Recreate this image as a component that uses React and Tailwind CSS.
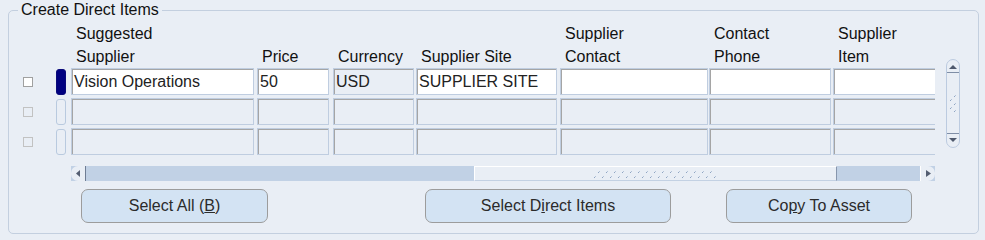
import React from "react";

const columns = [
  { cls: "w-[183px]", label: ["Suggested", "Supplier"], value: "Vision Operations" },
  { cls: "ml-[3px] w-[72px]", label: ["Price"], value: "50" },
  { cls: "ml-[4px] w-[81px]", label: ["Currency"], value: "USD", readOnly: true },
  { cls: "ml-[2px] w-[141px]", label: ["Supplier Site"], value: "SUPPLIER SITE" },
  { cls: "ml-[3px] w-[148px]", label: ["Supplier", "Contact"], value: "" },
  { cls: "ml-[1px] w-[122px]", label: ["Contact", "Phone"], value: "" },
  { cls: "ml-[2px] w-[120px]", label: ["Supplier", "Item"], value: "" },
];

const rows = [0, 1, 2];

function Field({ col, active }) {
  const bg = active && !col.readOnly ? "bg-white" : "bg-[#e9eef5]";
  return (
    <div
      className={`${col.cls} ${bg} h-[27px] shrink-0 overflow-hidden whitespace-nowrap border border-[#bfcde0] px-[2px] text-[16px] leading-[25px] text-[#222] shadow-[inset_1px_1px_0_#a5a5a5]`}
    >
      {active ? col.value : ""}
    </div>
  );
}

function GripDots() {
  const top = Array.from({ length: 15 }, (_, i) => 5 + i * 8);
  const bottom = Array.from({ length: 16 }, (_, i) => 1 + i * 8);
  return (
    <svg width="126" height="10" viewBox="0 0 126 10">
      {top.map((x) => (
        <g key={"t" + x}>
          <rect x={x} y={3} width="1" height="1" fill="#8ea4c2" />
          <rect x={x + 1} y={2} width="1" height="1" fill="#b3c3d8" />
        </g>
      ))}
      {bottom.map((x) => (
        <g key={"b" + x}>
          <rect x={x} y={8} width="1" height="1" fill="#8ea4c2" />
          <rect x={x + 1} y={7} width="1" height="1" fill="#b3c3d8" />
        </g>
      ))}
    </svg>
  );
}

function HScroll() {
  return (
    <div className="mt-[11px] ml-[62px] flex h-[15px] w-[864px] bg-[#c1d1e5]">
      <div className="flex h-[15px] w-[15px] items-center justify-center rounded-l-[7px] border-r border-[#6f7d94] bg-[#e9eef5]">
        <svg width="5" height="7" viewBox="0 0 5 7">
          <polygon points="4,0 4,7 0,3.5" fill="#545e72" />
        </svg>
      </div>
      <div className="w-[388px]" />
      <div className="flex h-[15px] w-[363px] items-center justify-center border-t border-l border-b border-r border-t-white border-l-white border-b-[#c3d1e3] border-r-[#8796ad] bg-[#e9eef5]">
        <GripDots />
      </div>
      <div className="w-[83px]" />
      <div className="flex h-[15px] w-[15px] items-center justify-center rounded-r-[7px] border-l border-white bg-[#e9eef5]">
        <svg width="5" height="7" viewBox="0 0 5 7">
          <polygon points="0,0 0,7 5,3.5" fill="#545e72" />
        </svg>
      </div>
    </div>
  );
}

function VScroll() {
  return (
    <div className="mt-[37px] ml-[11px] flex h-[89px] w-[14px] flex-col rounded-full border border-[#bccbe0] bg-[#e9eef5]">
      <div className="flex h-[13px] items-center justify-center border-b border-[#7f8ea6] pt-[1px]">
        <svg width="8" height="4" viewBox="0 0 8 4">
          <polygon points="0,4 8,4 4,0" fill="#4f596d" />
        </svg>
      </div>
      <div className="flex flex-1 items-center justify-center">
        <svg width="8" height="18" viewBox="0 0 8 18">
          {[
            [5, 1],
            [1, 5],
            [5, 9],
            [1, 13],
            [5, 16],
          ].map(([x, y]) => (
            <g key={x + "-" + y}>
              <rect x={x} y={y + 1} width="1" height="1" fill="#8ea4c2" />
              <rect x={x + 1} y={y} width="1" height="1" fill="#b3c3d8" />
            </g>
          ))}
        </svg>
      </div>
      <div className="flex h-[14px] items-center justify-center border-t border-[#7f8ea6] pb-[2px]">
        <svg width="8" height="4" viewBox="0 0 8 4">
          <polygon points="0,0 8,0 4,4" fill="#4f596d" />
        </svg>
      </div>
    </div>
  );
}

function Button({ className, children }) {
  return (
    <button
      className={`${className} flex h-[34px] shrink-0 items-center justify-center rounded-[7px] border border-[#9c9c9c] bg-[#d3e3f3] text-[16px] text-[#2b2b2b]`}
    >
      {children}
    </button>
  );
}

export default function App() {
  return (
    <div className="h-[240px] w-[985px] overflow-hidden bg-[#e9eef5] pt-[10px] pl-[8px] font-[Liberation_Sans,Arial,sans-serif]">
      <div className="relative h-[224px] w-[971px] rounded-[5px] border border-[#c3cfdf] pt-[11px]">
        <span className="absolute top-[-10px] left-[9px] bg-[#e9eef5] px-[3px] text-[16px] leading-[18px] text-[#111]">
          Create Direct Items
        </span>

        <div className="flex">
          <div className="w-[926px] shrink-0">
            <div className="ml-[62px] flex h-[46px] w-[864px] overflow-hidden">
              {columns.map((col) => (
                <div
                  key={col.label.join(" ")}
                  className={`${col.cls} flex shrink-0 flex-col justify-end pl-[5px] text-[16px] leading-[23px] whitespace-nowrap text-[#111]`}
                >
                  {col.label.map((l) => (
                    <span key={l}>{l}</span>
                  ))}
                </div>
              ))}
            </div>

            <div className="flex flex-col gap-[3px]">
              {rows.map((r) => {
                const active = r === 0;
                return (
                  <div key={r} className="flex h-[27px] items-center">
                    <div className="w-[47px] shrink-0">
                      <div
                        className={`ml-[14px] h-[10px] w-[10px] border ${
                          active ? "border-[#a0a0a0] bg-white" : "border-[#c2c2c2] bg-[#e9eef5]"
                        }`}
                      />
                    </div>
                    <div
                      className={`h-[26px] w-[10px] shrink-0 rounded-[3px] border ${
                        active ? "border-[#0a0a7a] bg-[#000080]" : "border-[#b9cadf] bg-[#e9eef5]"
                      }`}
                    />
                    <div className="ml-[5px] flex w-[864px] overflow-hidden">
                      {columns.map((col) => (
                        <Field key={col.label.join(" ")} col={col} active={active} />
                      ))}
                    </div>
                  </div>
                );
              })}
            </div>

            <HScroll />
          </div>
          <VScroll />
        </div>

        <div className="mt-[8px] flex">
          <Button className="ml-[72px] w-[187px]">
            <span>
              Select All (<span className="underline">B</span>)
            </span>
          </Button>
          <Button className="ml-[157px] w-[246px]">
            <span>
              Select D<span className="underline">i</span>rect Items
            </span>
          </Button>
          <Button className="ml-[55px] w-[186px]">
            <span>
              Co<span className="underline">p</span>y To Asset
            </span>
          </Button>
        </div>
      </div>
    </div>
  );
}
